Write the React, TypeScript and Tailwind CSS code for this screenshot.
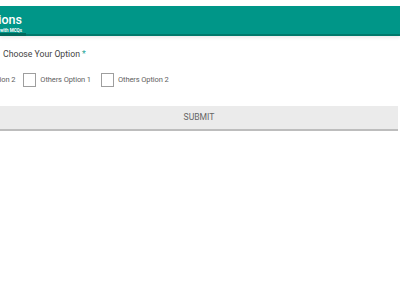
export default function App() {
  return (
    <div className="h-[300px] w-[400px] overflow-hidden bg-white font-['Roboto',sans-serif] antialiased">
      <div className="relative mt-[6px] h-[30px] border-b-2 border-[#00796b] bg-[#009688] shadow-[0_2px_3px_rgba(0,0,0,0.08)]">
        <div className="-ml-[100px] flex w-[122px] flex-col items-end pt-[7px]">
          <div className="text-[12.5px] font-medium leading-[14px] text-white">Questions</div>
          <div className="mt-[1px] text-[4.5px] font-bold leading-[6px] text-white">Checkbox with MCQs</div>
        </div>
        <div className="absolute -bottom-[2px] left-0 h-[3px] w-[26px] bg-[#00695c]" />
      </div>
      <div className="pl-[3px] pt-[11px] text-[8.7px] leading-[14px] text-[#444]">
        Choose Your Option <span className="text-[#26a69a]">*</span>
      </div>
      <div className="mt-[11px] flex h-[16px] items-center text-[7.5px] tracking-[-0.1px] text-[#616161]">
        <span className="-ml-[12px] whitespace-nowrap">Option 2</span>
        <span className="ml-[8px] h-[14px] w-[13px] border border-[#9e9e9e]" />
        <span className="ml-[4px] whitespace-nowrap">Others Option 1</span>
        <span className="ml-[10px] h-[14px] w-[13px] border border-[#9e9e9e]" />
        <span className="ml-[4px] whitespace-nowrap">Others Option 2</span>
      </div>
      <div className="mt-[18px] mr-[2px] flex h-[25px] items-center justify-center border-b-2 border-[#bdbdbd] bg-[#ebebeb] text-[8.6px] text-[#666]">
        SUBMIT
      </div>
    </div>
  );
}
